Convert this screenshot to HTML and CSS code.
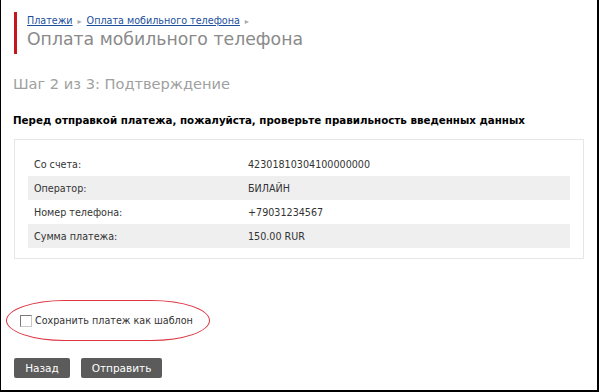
FILE: index.html
```html
<!DOCTYPE html>
<html lang="ru">
<head>
  <meta charset="UTF-8">
  <meta name="viewport" content="width=device-width, initial-scale=1.0">
  <title>Оплата мобильного телефона</title>
  <link rel="stylesheet" href="styles.css">
</head>
<body>
  <div class="page">
    <div class="header">
      <div class="crumbs">
        <a href="#">Платежи</a><span class="sep">&#9656;</span><a href="#">Оплата мобильного телефона</a><span class="sep">&#9656;</span>
      </div>
      <h1>Оплата мобильного телефона</h1>
    </div>

    <h2 class="step">Шаг 2 из 3: Подтверждение</h2>
    <p class="notice">Перед отправкой платежа, пожалуйста, проверьте правильность введенных данных</p>

    <div class="details">
      <div class="row"><span class="label">Со счета:</span><span>42301810304100000000</span></div>
      <div class="row alt"><span class="label">Оператор:</span><span>БИЛАЙН</span></div>
      <div class="row"><span class="label">Номер телефона:</span><span>+79031234567</span></div>
      <div class="row alt"><span class="label">Сумма платежа:</span><span>150.00 RUR</span></div>
    </div>

    <div class="template">
      <label><input type="checkbox"> Сохранить платеж как шаблон</label>
    </div>

    <div class="buttons">
      <button class="btn btn-back">Назад</button>
      <button class="btn btn-send">Отправить</button>
    </div>
  </div>
</body>
</html>
```

FILE: styles.css
```css
* {
  box-sizing: border-box;
  margin: 0;
  padding: 0;
}
body {
  background-color: #fff;
  font-family: "DejaVu Sans", Tahoma, sans-serif;
  font-size: 10px;
  color: #000;
}
.page {
  width: 599px;
  height: 392px;
  border-left: 1px solid #000;
  border-right: 2px solid #000;
  border-bottom: 2px solid #000;
  padding: 12px 0 0 12px;
}
.header {
  margin-left: 1px;
  border-left: 3px solid #c4161c;
  padding-left: 10px;
  height: 42px;
}
.crumbs {
  padding-top: 3px;
  height: 16px;
  font-size: 9.6px;
}
.crumbs a {
  color: #1a4f9c;
}
.crumbs .sep {
  color: #aaa;
  font-size: 8px;
  margin: 0 5px;
}
.header h1 {
  font-weight: normal;
  font-size: 17.3px;
  color: #8a8a8a;
  line-height: 22px;
}
.step {
  font-weight: normal;
  font-size: 14.6px;
  color: #a0a0a0;
  margin-top: 20px;
  line-height: 20px;
}
.notice {
  font-weight: bold;
  font-size: 10.3px;
  margin-top: 19px;
  line-height: 14px;
}
.details {
  margin: 12px 0 0 1px;
  width: 570px;
  border: 1px solid #e6e6e6;
  padding: 12px 13px 10px 13px;
}
.row {
  display: flex;
  height: 24px;
  align-items: center;
  padding-left: 6px;
  font-size: 9.6px;
  color: #333;
}
.row.alt {
  background-color: #efefef;
}
.label {
  width: 214px;
}
.template {
  margin: 41px 0 0 -7px;
  width: 204px;
  height: 41px;
  border: 1px solid #dc3440;
  border-radius: 60px / 21px;
  display: flex;
  align-items: center;
  padding-left: 13px;
}
.template label {
  display: flex;
  align-items: center;
  gap: 3px;
  font-size: 9.6px;
  color: #333;
}
.template input {
  -webkit-appearance: none;
  appearance: none;
  width: 12px;
  height: 12px;
  border: 1px solid #7a7a7a;
  border-right-color: #c8c8c8;
  border-bottom-color: #c8c8c8;
  background-color: #fff;
}
.buttons {
  display: flex;
  gap: 11px;
  margin: 17px 0 0 1px;
}
.btn {
  border: none;
  border-radius: 2px;
  background-color: #5b5b5b;
  color: #fff;
  font-family: inherit;
  font-size: 10.5px;
  height: 20px;
}
.btn-back {
  width: 56px;
}
.btn-send {
  width: 81px;
}
```
